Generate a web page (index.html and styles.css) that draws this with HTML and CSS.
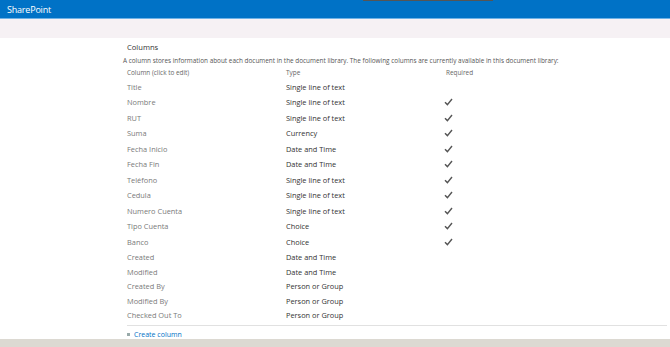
FILE: index.html
```html
<!DOCTYPE html>
<html lang="en">
<head>
  <meta charset="UTF-8">
  <title>Columns - SharePoint</title>
  <link rel="stylesheet" href="styles.css">
</head>
<body>

  <div class="suite-bar">
    <span class="brand">SharePoint</span>
    <span class="tab-shadow"></span>
  </div>
  <div class="ribbon"></div>

  <div class="content">
    <h2>Columns</h2>
    <p class="intro">A column stores information about each document in the document library. The following columns are currently available in this document library:</p>

    <table class="cols">
      <thead>
        <tr><th>Column (click to edit)</th><th>Type</th><th>Required</th></tr>
      </thead>
      <tbody>
        <tr><td>Title</td><td>Single line of text</td><td></td></tr>
        <tr><td>Nombre</td><td>Single line of text</td><td class="req"><svg class="tick" viewBox="0 0 9 8"><polyline points="1,4.2 3.4,6.6 8,1"/></svg></td></tr>
        <tr><td>RUT</td><td>Single line of text</td><td class="req"><svg class="tick" viewBox="0 0 9 8"><polyline points="1,4.2 3.4,6.6 8,1"/></svg></td></tr>
        <tr><td>Suma</td><td>Currency</td><td class="req"><svg class="tick" viewBox="0 0 9 8"><polyline points="1,4.2 3.4,6.6 8,1"/></svg></td></tr>
        <tr><td>Fecha Inicio</td><td>Date and Time</td><td class="req"><svg class="tick" viewBox="0 0 9 8"><polyline points="1,4.2 3.4,6.6 8,1"/></svg></td></tr>
        <tr><td>Fecha Fin</td><td>Date and Time</td><td class="req"><svg class="tick" viewBox="0 0 9 8"><polyline points="1,4.2 3.4,6.6 8,1"/></svg></td></tr>
        <tr><td>Teléfono</td><td>Single line of text</td><td class="req"><svg class="tick" viewBox="0 0 9 8"><polyline points="1,4.2 3.4,6.6 8,1"/></svg></td></tr>
        <tr><td>Cedula</td><td>Single line of text</td><td class="req"><svg class="tick" viewBox="0 0 9 8"><polyline points="1,4.2 3.4,6.6 8,1"/></svg></td></tr>
        <tr><td>Numero Cuenta</td><td>Single line of text</td><td class="req"><svg class="tick" viewBox="0 0 9 8"><polyline points="1,4.2 3.4,6.6 8,1"/></svg></td></tr>
        <tr><td>Tipo Cuenta</td><td>Choice</td><td class="req"><svg class="tick" viewBox="0 0 9 8"><polyline points="1,4.2 3.4,6.6 8,1"/></svg></td></tr>
        <tr><td>Banco</td><td>Choice</td><td class="req"><svg class="tick" viewBox="0 0 9 8"><polyline points="1,4.2 3.4,6.6 8,1"/></svg></td></tr>
        <tr class="sys"><td>Created</td><td>Date and Time</td><td></td></tr>
        <tr class="sys"><td>Modified</td><td>Date and Time</td><td></td></tr>
        <tr class="sys"><td>Created By</td><td>Person or Group</td><td></td></tr>
        <tr class="sys"><td>Modified By</td><td>Person or Group</td><td></td></tr>
        <tr class="sys"><td>Checked Out To</td><td>Person or Group</td><td></td></tr>
      </tbody>
    </table>

    <div class="create"><span class="bullet"></span><a href="#">Create column</a></div>
  </div>

  <div class="taskbar"></div>

</body>
</html>
```

FILE: styles.css
```css
body {
  margin: 0;
  font-family: "Open Sans", "Noto Sans", sans-serif;
  background: #fff;
  width: 670px;
  height: 347px;
  overflow: hidden;
  position: relative;
}

.suite-bar {
  height: 18px;
  background: #0072c6;
  border-bottom: 1px solid #6fb2e6;
  display: flex;
  align-items: center;
  padding-left: 7px;
  position: relative;
}

.brand {
  color: #fff;
  font-size: 9px;
  letter-spacing: -0.2px;
}

.tab-shadow {
  position: absolute;
  top: 0;
  left: 363px;
  width: 130px;
  height: 1px;
  background: #555;
}

.ribbon {
  height: 19px;
  background: #f6f1f4;
}

.content {
  padding-left: 127px;
  padding-right: 3px;
}

h2 {
  font-weight: normal;
  font-size: 7.6px;
  color: #333;
  margin: 4px 0 0;
  line-height: 11px;
}

.intro {
  font-size: 6.4px;
  color: #555;
  margin: 3px 0 0 -4px;
  line-height: 9px;
  white-space: nowrap;
}

.cols {
  border-collapse: collapse;
  margin-top: 1px;
  width: 540px;
  border-bottom: 1px solid #e1e1e1;
}

.cols th {
  font-weight: normal;
  font-size: 6.4px;
  color: #666;
  text-align: left;
  height: 13px;
  padding: 0;
}

.cols td {
  font-size: 7.4px;
  color: #7a7a7a;
  height: 15.5px;
  padding: 0;
  white-space: nowrap;
}

.cols tr.sys td {
  height: 14.8px;
}

.cols tr.sys:last-child td {
  height: 15px;
  vertical-align: top;
  padding-top: 1px;
}

.cols th:nth-child(1), .cols td:nth-child(1) { width: 159px; }
.cols th:nth-child(2), .cols td:nth-child(2) { width: 160px; }

.cols td:nth-child(2) {
  color: #333;
}

.cols td.req {
  line-height: 0;
}

.tick {
  width: 9px;
  height: 8px;
  fill: none;
  stroke: #555;
  stroke-width: 1.4;
  margin-left: -2px;
}

.create {
  display: flex;
  align-items: center;
  gap: 4px;
  height: 14px;
  margin-top: 2px;
  font-size: 7px;
}

.bullet {
  width: 3px;
  height: 3px;
  background: #9aa;
}

.create a {
  color: #0072c6;
  text-decoration: none;
}

.taskbar {
  position: absolute;
  left: 0;
  right: 0;
  bottom: 0;
  height: 8px;
  background: #dcd9d2;
}
```
